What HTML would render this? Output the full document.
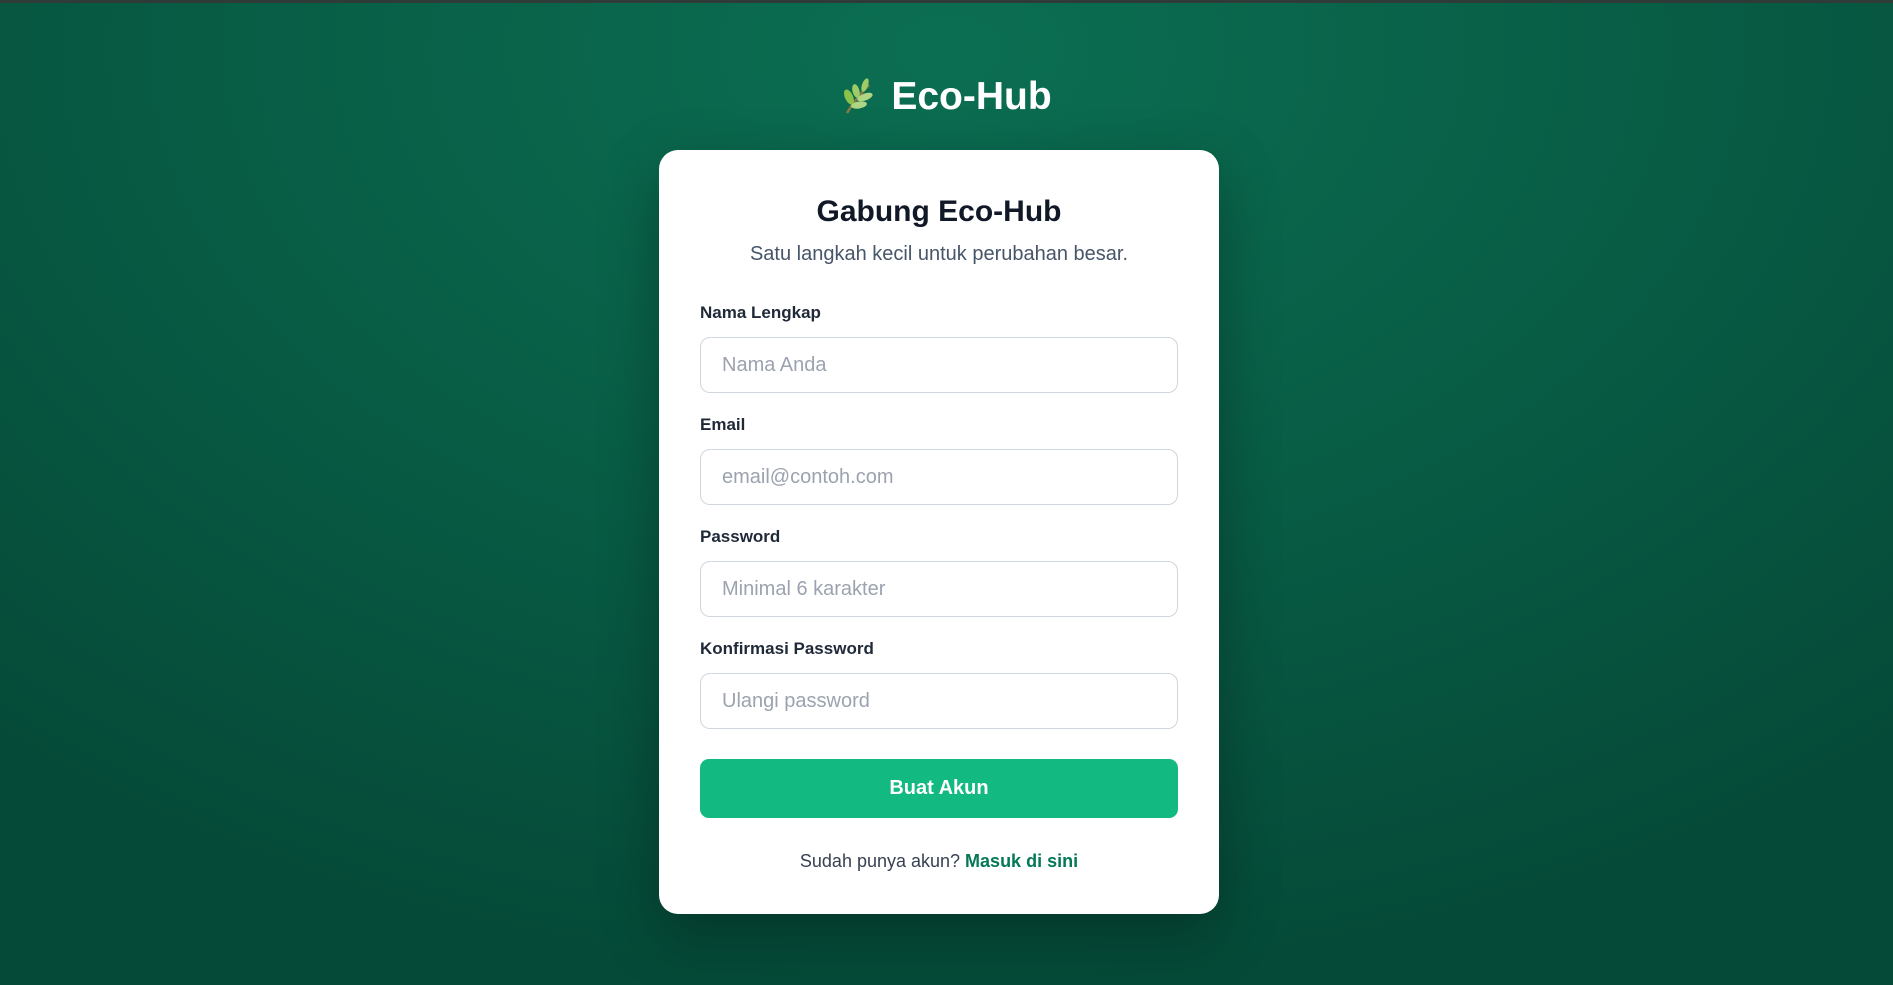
<!DOCTYPE html>
<html><head><meta charset="utf-8"><style>
*{box-sizing:border-box;margin:0;padding:0}
html,body{width:1893px;height:985px;overflow:hidden}
body{font-family:"Liberation Sans",sans-serif;background:radial-gradient(ellipse 75% 95% at 50% 5%,#0b6e52 0%,#085d45 50%,#054a38 100%);position:relative;border-top:3px solid #2f3b36}
.logo{position:absolute;top:69px;left:0;width:100%;text-align:center;color:#fff;font-weight:bold;font-size:39px;line-height:50px}
.logo svg{display:inline-block;vertical-align:-6px;margin-right:16px}
.card{position:absolute;left:659px;top:147px;width:560px;height:764px;background:#fff;border-radius:19px;box-shadow:0 20px 60px rgba(0,0,0,.3);padding:0 41px}
h1{text-align:center;font-size:30px;color:#111827;margin-top:42px;line-height:40px}
.sub{text-align:center;font-size:20px;color:#475569;margin-top:9px;line-height:26px}
label{display:block;font-weight:bold;font-size:17px;color:#1f2937;line-height:22px}
.g{position:absolute;left:41px;width:478px}
.in{margin-top:13px;height:56px;border:1px solid #cfd5dd;border-radius:10px;padding-left:21px;font-size:20px;color:#9ca3af;line-height:54px}
.btn{position:absolute;left:41px;top:609px;width:478px;height:59px;background:#12b981;border-radius:9px;color:#fff;font-weight:bold;font-size:20px;text-align:center;line-height:59px}
.foot{position:absolute;left:0;width:100%;top:701px;text-align:center;font-size:18px;color:#374151}
.foot b{color:#047857}
</style></head><body>
<div class="logo"><svg width="34" height="38" viewBox="0 0 34 38"><path d="M6 36 C12 26 18 18 28 8" stroke="#8a7a4a" stroke-width="2.5" fill="none"/><ellipse cx="8" cy="20" rx="4" ry="8" fill="#8bc34a" transform="rotate(-25 8 20)"/><ellipse cx="15" cy="14" rx="3.5" ry="7" fill="#9ccc65" transform="rotate(-15 15 14)"/><ellipse cx="24" cy="8" rx="3" ry="7" fill="#9ccc65" transform="rotate(20 24 8)"/><ellipse cx="24" cy="20" rx="8" ry="3.5" fill="#aed581" transform="rotate(-20 24 20)"/><ellipse cx="18" cy="28" rx="8" ry="3.5" fill="#aed581" transform="rotate(-10 18 28)"/></svg>Eco-Hub</div>
<div class="card">
<h1>Gabung Eco-Hub</h1>
<div class="sub">Satu langkah kecil untuk perubahan besar.</div>
<div class="g" style="top:152px"><label>Nama Lengkap</label><div class="in">Nama Anda</div></div>
<div class="g" style="top:264px"><label>Email</label><div class="in">email@contoh.com</div></div>
<div class="g" style="top:376px"><label>Password</label><div class="in">Minimal 6 karakter</div></div>
<div class="g" style="top:488px"><label>Konfirmasi Password</label><div class="in">Ulangi password</div></div>
<div class="btn">Buat Akun</div>
<div class="foot">Sudah punya akun? <b>Masuk di sini</b></div>
</div>
</body></html>
